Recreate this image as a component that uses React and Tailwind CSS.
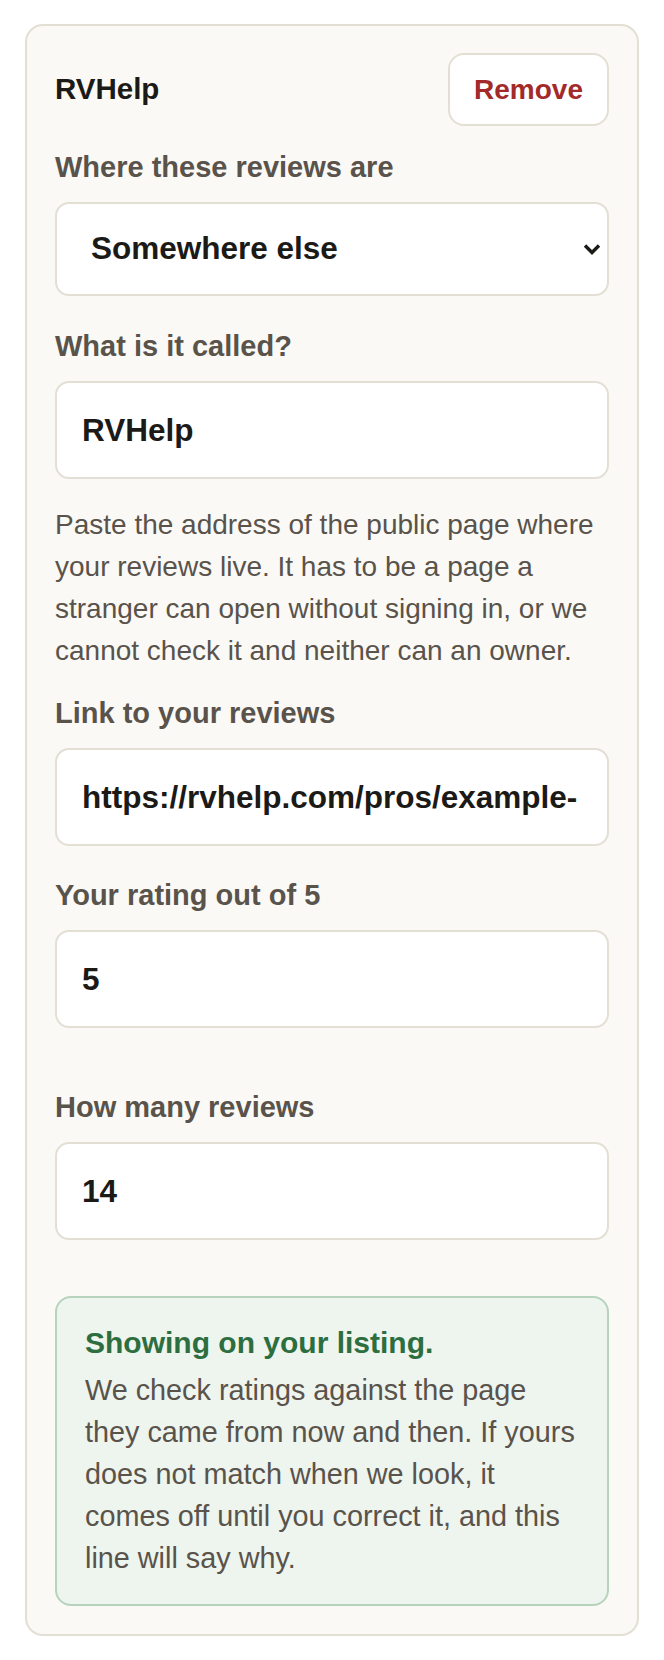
import React from 'react';

const font = { fontFamily: '"Liberation Sans", Arial, sans-serif' };

const labelCls = 'block text-[29px] leading-[34px] font-bold text-[#59534b] mb-[18px]';
const inputCls =
  'block w-full px-[25px] bg-white border-2 border-[#e3dfd4] rounded-[14px] text-[31.5px] font-bold text-[#1b1a17] outline-none';

const Field = ({ label, value, className = '', inputHeight = 'h-[98px]' }) => (
  <div className={className}>
    <label className={labelCls}>{label}</label>
    <input
      type="text"
      defaultValue={value}
      className={`${inputCls} ${inputHeight}`}
      style={font}
    />
  </div>
);

const App = () => {
  return (
    <div className="bg-white min-h-[1660px] pt-6 px-[25px]" style={font}>
      <div className="bg-[#faf9f5] border-2 border-[#e3dfd4] rounded-[18px] px-[28px] pt-[27px] pb-[28px]">
        {/* Header */}
        <div className="flex items-center justify-between">
          <h3 className="text-[29.5px] font-bold text-[#1b1a17]">RVHelp</h3>
          <button
            type="button"
            className="bg-white border-2 border-[#e3dfd4] rounded-[16px] px-[24px] py-[18px] text-[28px] leading-[33px] font-bold text-[#a32a2a]"
            style={font}
          >
            Remove
          </button>
        </div>

        {/* Where */}
        <div className="mt-[24px]">
          <label className={labelCls}>Where these reviews are</label>
          <div className="relative">
            <select
              defaultValue="else"
              className="block w-full h-[94px] appearance-none pl-[34px] pr-[40px] bg-white border-2 border-[#e3dfd4] rounded-[14px] text-[31.5px] font-bold text-[#1b1a17] outline-none"
              style={font}
            >
              <option value="google">Google</option>
              <option value="facebook">Facebook</option>
              <option value="else">Somewhere else</option>
            </select>
            <svg
              className="absolute right-[8px] top-1/2 -translate-y-1/2 pointer-events-none"
              width="18"
              height="12"
              viewBox="0 0 18 12"
              fill="none"
            >
              <path d="M2 2.5 L9 9.5 L16 2.5" stroke="#1b1a17" strokeWidth="3.4" />
            </svg>
          </div>
        </div>

        <Field className="mt-[33px]" label="What is it called?" value="RVHelp" />

        <p className="mt-[25px] text-[28px] leading-[42px] text-[#59534b]">
          Paste the address of the public page where your reviews live. It has to be a page a
          stranger can open without signing in, or we cannot check it and neither can an owner.
        </p>

        <Field
          className="mt-[24px]"
          label="Link to your reviews"
          value="https://rvhelp.com/pros/example-"
        />

        <Field className="mt-[32px]" label="Your rating out of 5" value="5" />

        <Field className="mt-[62px]" label="How many reviews" value="14" />

        {/* Status */}
        <div className="mt-[56px] bg-[#eef4ee] border-2 border-[#b6d3bc] rounded-[16px] pl-[28px] pr-[26px] pt-[26px] pb-[25px]">
          <p className="text-[30px] leading-[38px] font-bold text-[#2d6e40]">Showing on your listing.</p>
          <p className="mt-[7px] text-[28.8px] leading-[42px] text-[#59534b]">
            We check ratings against the page they came from now and then. If yours does not match
            when we look, it comes off until you correct it, and this line will say why.
          </p>
        </div>
      </div>
    </div>
  );
};

export default App;
